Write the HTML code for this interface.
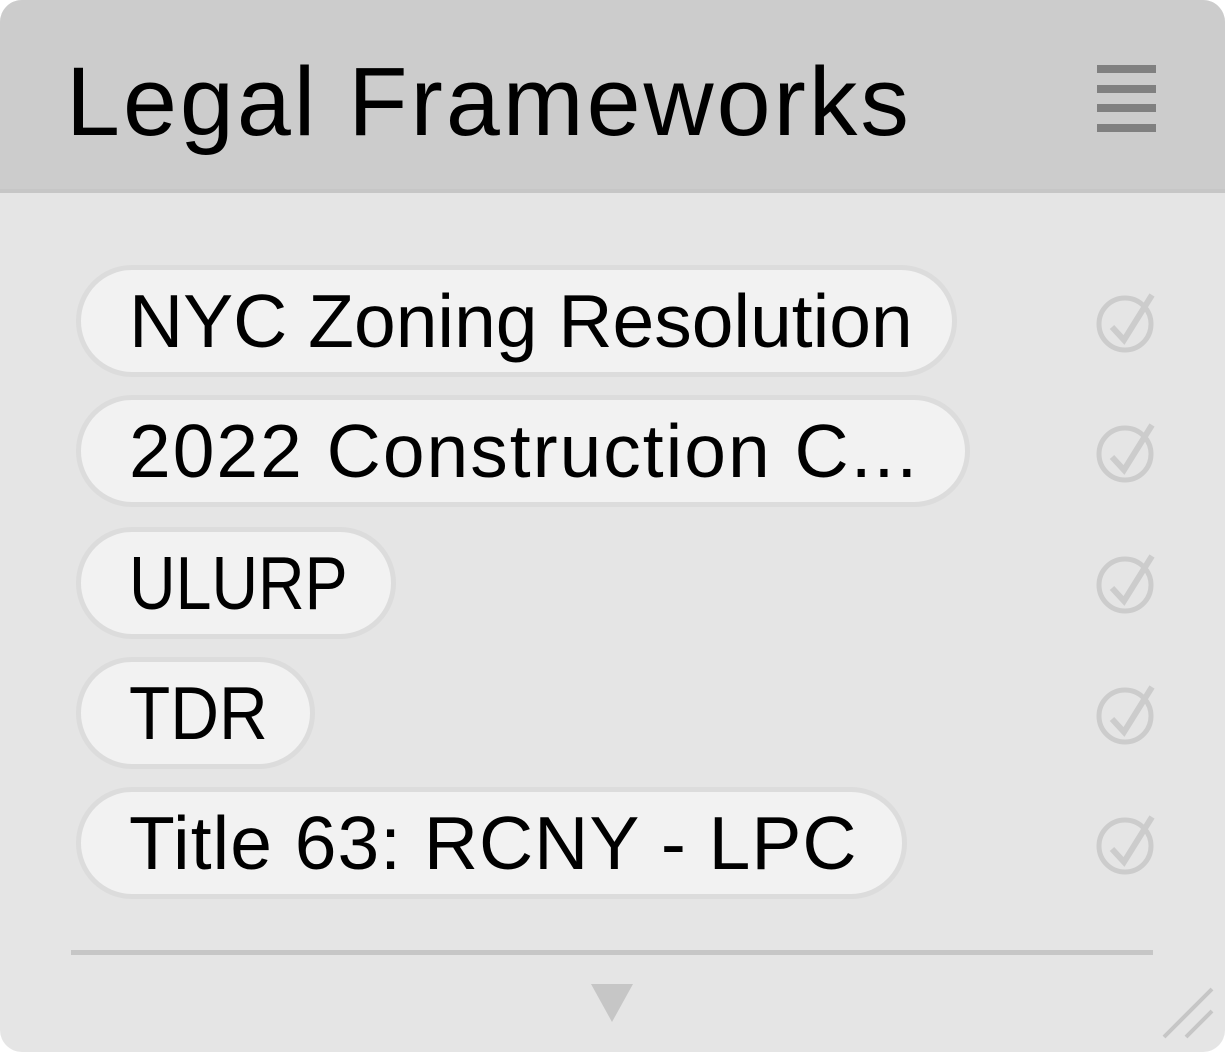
<!DOCTYPE html>
<html><head><style>
html,body{margin:0;padding:0;background:#fff;}
body{width:1225px;height:1052px;overflow:hidden;font-family:"Liberation Sans",sans-serif;}
.wrap{position:absolute;left:0;top:0;width:1225px;height:1052px;background:#e5e5e5;border-radius:22px;overflow:hidden;}
.hdr{position:absolute;left:0;top:0;width:1225px;height:189px;background:#cccccc;border-bottom:4px solid #c6c6c6;}
.title{position:absolute;left:66px;top:52px;font-size:97px;line-height:100px;color:#000;white-space:nowrap;letter-spacing:3px;}
.bar{position:absolute;left:1097px;width:59px;height:8px;background:#808080;}
.pill{position:absolute;left:76px;height:102px;background:#f2f2f2;border:5px solid #dcdcdc;border-radius:60px;box-sizing:content-box;}
.pill span{position:absolute;left:48px;top:14px;font-size:75px;line-height:75px;color:#000;white-space:nowrap;transform-origin:0 0;}
.chk{position:absolute;left:1093px;}
.div{position:absolute;left:71px;top:950px;width:1082px;height:5px;background:#c6c6c6;}
</style></head><body>
<div class="wrap">
<div class="hdr">
<div class="title">Legal Frameworks</div>
<div class="bar" style="top:65px"></div>
<div class="bar" style="top:85px"></div>
<div class="bar" style="top:104px"></div>
<div class="bar" style="top:124px"></div>
</div>

<div class="pill" style="top:265px;width:871px"><span>NYC Zoning Resolution</span></div>
<div class="pill" style="top:395px;width:884px"><span style="letter-spacing:2px">2022 Construction C...</span></div>
<div class="pill" style="top:527px;width:310px"><span style="transform:scaleX(0.86)">ULURP</span></div>
<div class="pill" style="top:657px;width:229px"><span style="transform:scaleX(0.9)">TDR</span></div>
<div class="pill" style="top:787px;width:821px"><span style="letter-spacing:1px">Title 63: RCNY - LPC</span></div>

<svg class="chk" style="top:290px" width="64" height="64" viewBox="0 0 64 64"><circle cx="32" cy="34" r="26" fill="none" stroke="#cccccc" stroke-width="5"/><path d="M19 37 L31 50 L59 5" fill="none" stroke="#cccccc" stroke-width="6"/></svg>
<svg class="chk" style="top:420px" width="64" height="64" viewBox="0 0 64 64"><circle cx="32" cy="34" r="26" fill="none" stroke="#cccccc" stroke-width="5"/><path d="M19 37 L31 50 L59 5" fill="none" stroke="#cccccc" stroke-width="6"/></svg>
<svg class="chk" style="top:551px" width="64" height="64" viewBox="0 0 64 64"><circle cx="32" cy="34" r="26" fill="none" stroke="#cccccc" stroke-width="5"/><path d="M19 37 L31 50 L59 5" fill="none" stroke="#cccccc" stroke-width="6"/></svg>
<svg class="chk" style="top:682px" width="64" height="64" viewBox="0 0 64 64"><circle cx="32" cy="34" r="26" fill="none" stroke="#cccccc" stroke-width="5"/><path d="M19 37 L31 50 L59 5" fill="none" stroke="#cccccc" stroke-width="6"/></svg>
<svg class="chk" style="top:812px" width="64" height="64" viewBox="0 0 64 64"><circle cx="32" cy="34" r="26" fill="none" stroke="#cccccc" stroke-width="5"/><path d="M19 37 L31 50 L59 5" fill="none" stroke="#cccccc" stroke-width="6"/></svg>

<div class="div"></div>
<svg style="position:absolute;left:588px;top:982px" width="48" height="42" viewBox="0 0 48 42"><path d="M3 2 L45 2 L24 40 Z" fill="#c6c6c6"/></svg>
<svg style="position:absolute;left:1160px;top:985px" width="56" height="56" viewBox="0 0 56 56"><path d="M4 52 L52 4 M26 52 L52 26" stroke="#c6c6c6" stroke-width="4"/></svg>
</div>
</body></html>
